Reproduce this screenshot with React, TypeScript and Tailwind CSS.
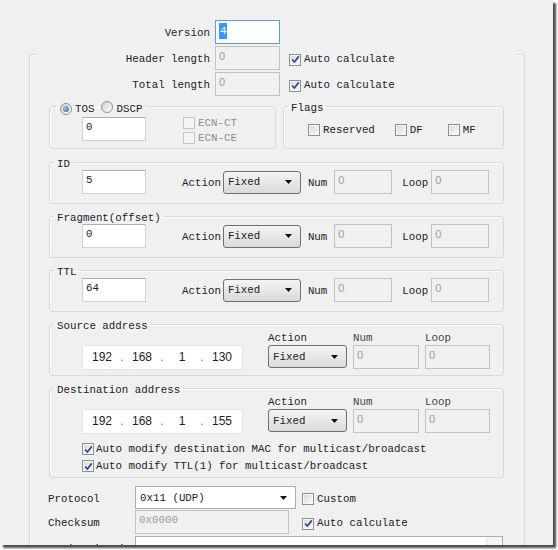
import clsx from "clsx"

// win7-ish IPv4 header editor panel

function Check({ checked, disabled }: { checked?: boolean; disabled?: boolean }) {
  return (
    <span
      className={clsx(
        "inline-flex h-[12px] w-[12px] shrink-0 items-center justify-center border",
        disabled
          ? "border-[#c6c6c6] bg-[#f4f4f4]"
          : "border-[#8e8f8f] bg-gradient-to-br from-[#d8d8d8] to-[#fbfbfb] shadow-[inset_0_0_0_1px_#f6f6f6]"
      )}
    >
      {checked && (
        <svg width="9" height="9" viewBox="0 0 9 9">
          <path d="M1.2 4.6 L3.4 7 L7.8 1.4" fill="none" stroke="#2c4a8c" strokeWidth="1.7" />
        </svg>
      )}
    </span>
  )
}

// checkbox + its text, both sitting a touch low like the rest of the labels
function CheckLabel({
  text,
  checked,
  disabled,
  className,
  gap = "ml-[3px]",
}: {
  text: string
  checked?: boolean
  disabled?: boolean
  className?: string
  gap?: string
}) {
  return (
    <span className={clsx("flex items-center pt-[3px]", className)}>
      <Check checked={checked} disabled={disabled} />
      <span className={gap}>{text}</span>
    </span>
  )
}

function Radio({ on }: { on?: boolean }) {
  return (
    <span className="inline-flex h-[12px] w-[12px] shrink-0 items-center justify-center rounded-full border border-[#8e8f8f] bg-gradient-to-br from-[#d4d4d4] to-[#fafafa]">
      {on && (
        <span className="h-[6px] w-[6px] rounded-full bg-[radial-gradient(circle_at_35%_35%,#9cc9f0,#1f5c9e)]" />
      )}
    </span>
  )
}

// label text, nudged down a bit like Courier New on Windows
function Txt({ children, className }: { children: React.ReactNode; className?: string }) {
  return <span className={clsx("pt-[3px]", className)}>{children}</span>
}

function Field({
  value,
  className,
  disabled,
  sans,
}: {
  value?: string
  className?: string
  disabled?: boolean
  sans?: boolean
}) {
  return (
    <div
      className={clsx(
        "flex h-[24px] shrink-0 items-center border px-[3px] pb-[3px]",
        disabled
          ? "border-[#c2c2c2] bg-[#f0f0f0] text-[#9c9c9c]"
          : "border-[#d0d3d6] border-t-[#abadb3] bg-white text-[#222]",
        sans && "font-['Liberation_Sans',sans-serif] text-[11px]",
        className
      )}
    >
      {value}
    </div>
  )
}

function Select({ value, className }: { value: string; className?: string }) {
  return (
    <div
      className={clsx(
        "flex h-[23px] shrink-0 items-center justify-between rounded-[3px] border border-[#707070] bg-gradient-to-b from-[#f4f4f4] to-[#dadada] pl-[4px] pr-[8px] text-[#222]",
        className
      )}
    >
      <span className="pt-[1px]">{value}</span>
      <svg width="7" height="4" viewBox="0 0 7 4">
        <path d="M0 0h7L3.5 4z" fill="#111" />
      </svg>
    </div>
  )
}

function IpBox({ parts }: { parts: string[] }) {
  return (
    <div className="flex h-[25px] w-[161px] shrink-0 items-center border border-[#e2e4e6] bg-white pl-[4px] pb-[1px] font-['Liberation_Sans',sans-serif] text-[12px] text-[#222]">
      {parts.map((p, i) => (
        <div key={i} className="flex">
          {i > 0 && <span className="w-[10px] text-center text-[#777]">.</span>}
          <span className="w-[30px] text-center">{p}</span>
        </div>
      ))}
    </div>
  )
}

function Group({
  legend,
  className,
  legendClass,
  children,
}: {
  legend: React.ReactNode
  className?: string
  legendClass?: string
  children: React.ReactNode
}) {
  return (
    <fieldset
      className={clsx(
        "ml-[19px] shrink-0 rounded-[3px] border border-[#d9d9d9] shadow-[inset_1px_1px_0_#fbfbfb]",
        className
      )}
    >
      <legend className={clsx("ml-[4px] px-[3px] leading-[12px]", legendClass)}>
        <span className="block h-[12px] pt-[2px]">{legend}</span>
      </legend>
      {children}
    </fieldset>
  )
}

function ActionRow({ label, value }: { label: string; value: string }) {
  return (
    <Group legend={label} className="mt-[6px] h-[48px] w-[455px]">
      <div className="mt-[2px] flex items-center">
        <Field value={value} className="ml-[32px] w-[64px]" />
        <Txt className="ml-[36px]">Action</Txt>
        <Select value="Fixed" className="ml-[2px] w-[78px]" />
        <Txt className="ml-[7px]">Num</Txt>
        <Field value="0" disabled sans className="ml-[7px] w-[58px]" />
        <Txt className="ml-[10px]">Loop</Txt>
        <Field value="0" disabled sans className="ml-[3px] w-[58px]" />
      </div>
    </Group>
  )
}

function AddressRow({ parts }: { parts: string[] }) {
  return (
    <div className="flex items-start">
      <div className="ml-[32px] mt-[15px]">
        <IpBox parts={parts} />
      </div>
      <div className="ml-[25px] flex flex-col">
        <span className="h-[15px] pt-[2px] leading-[13px]">Action</span>
        <Select value="Fixed" className="w-[79px]" />
      </div>
      <div className="ml-[6px] flex flex-col">
        <span className="h-[15px] pt-[2px] leading-[13px] text-[#444]">Num</span>
        <Field value="0" disabled sans className="w-[66px]" />
      </div>
      <div className="ml-[6px] flex flex-col">
        <span className="h-[15px] pt-[2px] leading-[13px] text-[#444]">Loop</span>
        <Field value="0" disabled sans className="w-[65px]" />
      </div>
    </div>
  )
}

export default function App() {
  return (
    <div className="h-[550px] w-[558px] overflow-hidden bg-white">
      <div className="flex h-[545px] w-[553px] flex-col overflow-hidden bg-[#f0f0f0] font-['Liberation_Mono',monospace] text-[10.8px] text-[#222] shadow-[3px_3px_2px_rgba(0,0,0,0.7)]">
        {/* Version */}
        <div className="mt-[20px] flex items-center">
          <Txt className="w-[210px] text-right">Version</Txt>
          <div className="ml-[5px] flex h-[24px] w-[65px] items-center border border-[#5b9be0] bg-white pl-[3px] pb-[2px]">
            <span className="bg-[#3399ff] px-[1px] text-white">4</span>
          </div>
        </div>

        {/* outer group box */}
        <div className="ml-[29px] mt-[10px] flex w-[496px] flex-1 flex-col rounded-t-[3px] border border-b-0 border-[#d9d9d9] shadow-[inset_1px_1px_0_#fbfbfb]">
          <div className="mx-[7px] -mt-[9px] flex flex-col gap-[2px] bg-[#f0f0f0]">
            {["Header length", "Total length"].map((l) => (
              <div key={l} className="flex items-center">
                <Txt className="w-[173px] text-right">{l}</Txt>
                <Field value="0" disabled sans className="ml-[5px] w-[65px]" />
                <CheckLabel text="Auto calculate" checked className="ml-[9px]" />
              </div>
            ))}
          </div>

          {/* TOS / Flags */}
          <div className="mt-[4px] flex">
            <Group
              className="h-[49px] w-[227px]"
              legendClass="!ml-[6px] !px-[4px]"
              legend={
                <span className="-mt-[1px] flex items-center">
                  <Radio on />
                  <span className="ml-[3px] pt-[1px]">TOS</span>
                  <span className="ml-[7px]">
                    <Radio />
                  </span>
                  <span className="ml-[3px] pt-[1px]">DSCP</span>
                </span>
              }
            >
              <div className="mt-[5px] flex items-start">
                <Field value="0" className="ml-[32px] w-[64px]" />
                <div className="-mt-[3px] ml-[37px] flex flex-col text-[#8c8c8c]">
                  {["ECN-CT", "ECN-CE"].map((e) => (
                    <div key={e} className="flex h-[15px] items-center">
                      <CheckLabel text={e} disabled />
                    </div>
                  ))}
                </div>
              </div>
            </Group>
            <Group legend="Flags" className="!ml-[7px] h-[49px] w-[221px]">
              <div className="mt-[9px] flex h-[15px] items-center">
                <CheckLabel text="Reserved" className="ml-[24px]" />
                <CheckLabel text="DF" className="ml-[20px]" />
                <CheckLabel text="MF" className="ml-[25px]" />
              </div>
            </Group>
          </div>

          <div className="mt-[1px] flex flex-col">
            <ActionRow label="ID" value="5" />
            <ActionRow label="Fragment(offset)" value="0" />
            <ActionRow label="TTL" value="64" />
          </div>

          <Group legend="Source address" className="mt-[6px] h-[58px] w-[455px]">
            <AddressRow parts={["192", "168", "1", "130"]} />
          </Group>

          <Group legend="Destination address" className="mt-[6px] h-[96px] w-[455px]">
            <AddressRow parts={["192", "168", "1", "155"]} />
            <div className="mt-[5px] flex flex-col">
              {[
                "Auto modify destination MAC for multicast/broadcast",
                "Auto modify TTL(1) for multicast/broadcast",
              ].map((t) => (
                <div key={t} className="flex h-[17px] items-center">
                  <CheckLabel text={t} checked gap="ml-[2px]" className="ml-[32px]" />
                </div>
              ))}
            </div>
          </Group>

          {/* protocol / checksum */}
          <div className="mt-[8px] flex items-center">
            <Txt className="ml-[18px] w-[87px]">Protocol</Txt>
            <div className="flex h-[23px] w-[161px] items-center justify-between border border-[#abadb3] bg-white pl-[4px] pr-[8px]">
              <span className="pt-[1px]">0x11 (UDP)</span>
              <svg width="7" height="4" viewBox="0 0 7 4">
                <path d="M0 0h7L3.5 4z" fill="#111" />
              </svg>
            </div>
            <CheckLabel text="Custom" className="ml-[6px]" />
          </div>
          <div className="mt-[1px] flex items-center">
            <Txt className="ml-[18px] w-[87px]">Checksum</Txt>
            <Field value="0x0000" disabled className="h-[23px] w-[154px]" />
            <CheckLabel text="Auto calculate" checked className="ml-[13px]" />
          </div>
          <div className="mt-[2px] flex items-start">
            <span className="ml-[18px] mt-[5px] w-[87px]">Options(Hex)</span>
            <div className="flex h-[24px] w-[368px] justify-end border border-[#abadb3] bg-white">
              <div className="h-full w-[16px] border-l border-[#e6e6e6] bg-[#f4f4f4]" />
            </div>
          </div>
        </div>
      </div>
    </div>
  )
}
